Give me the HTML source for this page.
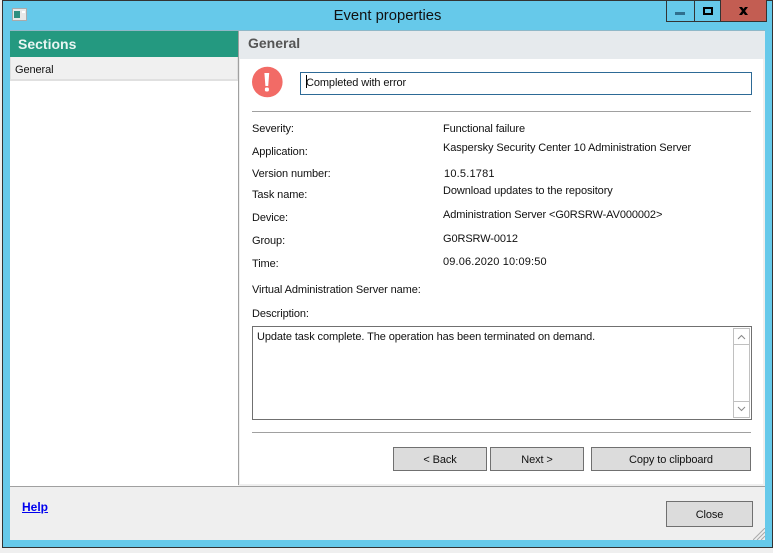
<!DOCTYPE html>
<html><head><meta charset="utf-8">
<style>
html,body{margin:0;padding:0;width:773px;height:553px;overflow:hidden;background:#efefef}
body{position:relative;font-family:"Liberation Sans",sans-serif;font-size:11px;color:#111}
.a{position:absolute}
.t{position:absolute;white-space:nowrap;line-height:16px;letter-spacing:-.1px}
.b{position:absolute;box-sizing:border-box;background:#dcdcdc;border:1px solid #707070;text-align:center;white-space:nowrap;line-height:24px;letter-spacing:-.1px}
</style></head><body>
<div class="a" style="left:2px;top:0;width:771px;height:548px;box-sizing:border-box;background:#66c9ea;border:1px solid #333"></div>

<svg class="a" style="left:12px;top:8px" width="16" height="14"><rect x=".5" y=".5" width="14" height="12" fill="#e8e8e8" stroke="#aaa"/><rect x="2" y="3" width="6" height="7" fill="#2f8f80"/><rect x="10" y="3" width="3" height="2" fill="#fff"/></svg>
<div class="t" style="left:1px;width:773px;top:8px;text-align:center;font-size:14.8px;line-height:17px;letter-spacing:0">Event properties</div>

<div class="a" style="left:666px;top:0;width:101px;height:22px;box-sizing:border-box;border:1px solid #333;border-top:0"></div>
<div class="a" style="left:694px;top:0;width:1px;height:21px;background:#333"></div>
<div class="a" style="left:720px;top:0;width:46px;height:21px;background:#c35d52;border-left:1px solid #333;box-sizing:border-box"></div>
<div class="a" style="left:675px;top:12px;width:10px;height:3px;background:#2f6f8e"></div>
<div class="a" style="left:703px;top:7px;width:10px;height:8px;box-sizing:border-box;border:2px solid #000"></div>
<svg class="a" style="left:738px;top:6px" width="12" height="10"><path d="M1 1H4L5.5 3 7 1H10L7 5 10 9H7L5.5 7 4 9H1L4 5Z" fill="#000"/></svg>

<div class="a" style="left:10px;top:30px;width:755px;height:510px;background:#efefef;border-top:1px solid #8fb8c8;box-sizing:border-box"></div>
<div class="a" style="left:10px;top:31px;width:228px;height:455px;background:#fff"></div>
<div class="a" style="left:10px;top:31px;width:228px;height:26px;background:#249980"></div>
<div class="t" style="left:18px;top:35px;font-weight:bold;font-size:14px;line-height:18px;color:#e8f5f2;letter-spacing:0">Sections</div>
<div class="a" style="left:10px;top:57px;width:228px;height:24px;box-sizing:border-box;background:#f0f0f0;border:1px solid #e0e0e0;border-width:0 1px 2px 1px"></div>
<div class="t" style="left:15px;top:62px">General</div>
<div class="a" style="left:238px;top:31px;width:1px;height:454px;background:#a0a0a0"></div>

<div class="a" style="left:239px;top:31px;width:526px;height:28px;background:#e6eaed"></div>
<div class="t" style="left:248px;top:35px;font-weight:bold;font-size:14px;line-height:17px;color:#555;letter-spacing:0">General</div>
<div class="a" style="left:240px;top:59px;width:523px;height:425px;background:#fff"></div>

<svg class="a" style="left:252px;top:66px" width="31" height="32"><circle cx="15.3" cy="16" r="15.3" fill="#f26b66"/><path d="M12.4 7H17.2L16.2 20H13.4Z" fill="#fff"/><rect x="12.9" y="21.5" width="4" height="4" rx="1.5" fill="#fff"/></svg>
<div class="a" style="left:300px;top:72px;width:452px;height:23px;box-sizing:border-box;border:1px solid #2d6a96;background:#fff"></div>
<div class="a" style="left:306px;top:75px;width:1px;height:13px;background:#000"></div>
<div class="t" style="left:306px;top:75px">Completed with error</div>
<div class="a" style="left:252px;top:111px;width:499px;height:1px;background:#a0a0a0"></div>

<div class="t" style="left:252px;top:121px">Severity:</div>
<div class="t" style="left:252px;top:144px">Application:</div>
<div class="t" style="left:252px;top:166px">Version number:</div>
<div class="t" style="left:252px;top:187px">Task name:</div>
<div class="t" style="left:252px;top:210px">Device:</div>
<div class="t" style="left:252px;top:233px">Group:</div>
<div class="t" style="left:252px;top:256px">Time:</div>
<div class="t" style="left:252px;top:282px">Virtual Administration Server name:</div>
<div class="t" style="left:252px;top:306px">Description:</div>

<div class="t" style="left:443px;top:121px">Functional failure</div>
<div class="t" style="left:443px;top:140px">Kaspersky Security Center 10 Administration Server</div>
<div class="t" style="left:444px;top:166px;letter-spacing:.2px">10.5.1781</div>
<div class="t" style="left:443px;top:183px">Download updates to the repository</div>
<div class="t" style="left:443px;top:207px">Administration Server &lt;G0RSRW-AV000002&gt;</div>
<div class="t" style="left:443px;top:231px">G0RSRW-0012</div>
<div class="t" style="left:443px;top:254px;letter-spacing:.15px">09.06.2020 10:09:50</div>

<div class="a" style="left:252px;top:326px;width:500px;height:94px;box-sizing:border-box;border:1px solid #707070;background:#fff"></div>
<div class="t" style="left:257px;top:329px">Update task complete. The operation has been terminated on demand.</div>
<div class="a" style="left:733px;top:328px;width:17px;height:90px;box-sizing:border-box;border:1px solid #c0c0c0;background:#fff"></div>
<div class="a" style="left:733px;top:344px;width:17px;height:1px;background:#c0c0c0"></div>
<div class="a" style="left:733px;top:401px;width:17px;height:1px;background:#c0c0c0"></div>
<svg class="a" style="left:733px;top:328px" width="17" height="90" fill="none" stroke="#888"><path d="M5 11L8.5 7.5 12 11"/><path d="M5 79L8.5 82.5 12 79"/></svg>

<div class="a" style="left:252px;top:432px;width:499px;height:1px;background:#a0a0a0"></div>
<div class="b" style="left:393px;top:447px;width:94px;height:24px">&lt; Back</div>
<div class="b" style="left:490px;top:447px;width:94px;height:24px">Next &gt;</div>
<div class="b" style="left:591px;top:447px;width:160px;height:24px">Copy to clipboard</div>

<div class="a" style="left:10px;top:486px;width:755px;height:1px;background:#a0a0a0"></div>
<div class="t" style="left:22px;top:499px;font-weight:bold;font-size:12px;color:#0000ee;text-decoration:underline;letter-spacing:0">Help</div>
<div class="b" style="left:666px;top:501px;width:87px;height:26px;line-height:26px">Close</div>
<svg class="a" style="left:753px;top:528px" width="12" height="12" stroke="#aaa"><path d="M12 0L0 12M12 4L4 12M12 8L8 12"/></svg>
</body></html>
